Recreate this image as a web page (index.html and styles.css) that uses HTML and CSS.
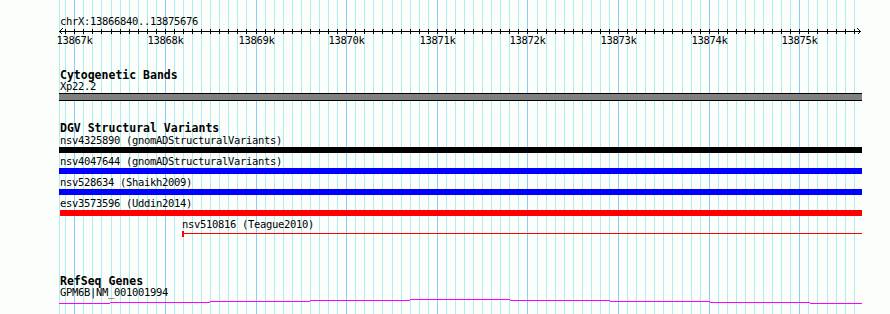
FILE: index.html
```html
<!DOCTYPE html>
<html lang="en">

<head>
    <meta charset="UTF-8">
    <meta name="viewport" content="width=device-width, initial-scale=1.0">
    <title>Genome Browser - chrX:13866840..13875676</title>
    <link rel="stylesheet" href="styles.css">
</head>

<body>
    <div class="browser">
        <div class="grid" id="grid"></div>

        <div class="tracks">
            <div class="locus">chrX:13866840..13875676</div>

            <div class="ruler" id="ruler">
                <svg class="arrow arrow-left" width="6" height="9" viewBox="0 0 6 9">
                    <polyline points="3.5,1.5 0.5,4.5 3.5,7.5" />
                </svg>
                <svg class="arrow arrow-right" width="6" height="9" viewBox="0 0 6 9">
                    <polyline points="2.5,1.5 5.5,4.5 2.5,7.5" />
                </svg>
            </div>
            <div class="ruler-labels" id="ruler-labels"></div>

            <div class="track cyto">
                <div class="track-title">Cytogenetic Bands</div>
                <div class="feature-label">Xp22.2</div>
                <div class="band"></div>
            </div>

            <div class="track dgv">
                <div class="track-title">DGV Structural Variants</div>

                <div class="sv-row">
                    <div class="feature-label">nsv4325890 (gnomADStructuralVariants)</div>
                    <div class="sv-bar black"></div>
                </div>
                <div class="sv-row">
                    <div class="feature-label">nsv4047644 (gnomADStructuralVariants)</div>
                    <div class="sv-bar blue"></div>
                </div>
                <div class="sv-row">
                    <div class="feature-label">nsv528634 (Shaikh2009)</div>
                    <div class="sv-bar blue"></div>
                </div>
                <div class="sv-row">
                    <div class="feature-label">esv3573596 (Uddin2014)</div>
                    <div class="sv-bar red" style="margin-left: 1px;"></div>
                </div>
                <div class="sv-row" style="margin-left: 123px;">
                    <div class="feature-label flush">nsv510816 (Teague2010)</div>
                    <div class="sv-thin"></div>
                </div>
            </div>

            <div class="track refseq">
                <div class="track-title">RefSeq Genes</div>
                <div class="feature-label">GPM6B|NM_001001994</div>
                <div class="gene-line" id="gene-line"></div>
            </div>
        </div>
    </div>

    <script>
        const originBp = 13867000;
        const originX = 74.3;
        const pxPerBp = 0.09063;
        const trackLeft = 59;

        function toX(bp) {
            return Math.round(originX + (bp - originBp) * pxPerBp);
        }

        const grid = document.getElementById('grid');
        const ruler = document.getElementById('ruler');
        const rulerLabels = document.getElementById('ruler-labels');

        // left edge of the view
        const edge = document.createElement('div');
        edge.className = 'grid-line';
        edge.style.left = trackLeft + 'px';
        grid.appendChild(edge);

        for (let bp = 13866900; bp <= 13875600; bp += 100) {
            const x = toX(bp);
            const major = bp % 1000 === 0;

            const line = document.createElement('div');
            line.className = major ? 'grid-line major' : 'grid-line';
            line.style.left = x + 'px';
            grid.appendChild(line);

            const tick = document.createElement('span');
            tick.className = 'tick';
            tick.style.left = (x - trackLeft) + 'px';
            ruler.appendChild(tick);

            if (major) {
                const label = document.createElement('span');
                label.className = 'ruler-label';
                label.textContent = (bp / 1000) + 'k';
                label.style.left = (x - trackLeft + 0.5) + 'px';
                rulerLabels.appendChild(label);
            }
        }

        // gene drawn as steps: [start x, end x, y offset]
        const geneSteps = [
            [59, 110, 4], [110, 210, 3], [210, 310, 2], [310, 410, 1], [410, 510, 0],
            [510, 610, 1], [610, 710, 2], [710, 810, 3], [810, 862, 4]
        ];
        const geneLine = document.getElementById('gene-line');
        geneSteps.forEach(([start, end, offset]) => {
            const seg = document.createElement('span');
            seg.className = 'gene-seg';
            seg.style.width = (end - start) + 'px';
            seg.style.marginTop = offset + 'px';
            geneLine.appendChild(seg);
        });
    </script>
</body>

</html>
```

FILE: styles.css
```css
* {
    margin: 0;
    padding: 0;
    box-sizing: border-box;
}

body {
    font-family: "DejaVu Sans Mono", "Liberation Mono", monospace;
    font-size: 10.5px;
    letter-spacing: -0.32px;
    line-height: 11px;
    color: #000;
    background-color: #fcfefc;
}

.browser {
    position: relative;
    width: 890px;
    height: 314px;
    overflow: hidden;
}

.grid {
    position: absolute;
    top: 0;
    left: 0;
    right: 0;
    bottom: 0;
}

.grid-line {
    position: absolute;
    top: 0;
    bottom: 0;
    width: 1px;
    background: #afeeee;
}

.grid-line.major {
    background: #87cefa;
}

.tracks {
    position: relative;
    margin-left: 59px;
    width: 803px;
    padding-top: 16px;
}

.locus {
    padding-left: 1px;
}

.ruler {
    position: relative;
    height: 8px;
}

.ruler::before {
    content: '';
    position: absolute;
    left: 0;
    right: 2px;
    top: 4px;
    height: 1px;
    background: #000;
}

.arrow {
    position: absolute;
    top: 0;
    shape-rendering: crispEdges;
}

.arrow polyline {
    fill: none;
    stroke: #000;
    stroke-width: 1;
}

.arrow-left {
    left: 0;
}

.arrow-right {
    left: 796px;
}

.tick {
    position: absolute;
    top: 2px;
    width: 1px;
    height: 5px;
    background: #000;
}

.ruler-labels {
    position: relative;
    height: 11px;
}

.ruler-label {
    position: absolute;
    top: 0;
    transform: translateX(-50%);
    white-space: nowrap;
}

.track-title {
    font-weight: bold;
    font-size: 11.5px;
    letter-spacing: 0;
    line-height: 12px;
    padding-left: 1px;
}

.feature-label {
    padding-left: 1px;
    white-space: nowrap;
}

.feature-label.flush {
    padding-left: 0;
}

.cyto {
    margin-top: 23px;
}

.band {
    margin-top: 1px;
    height: 8px;
    background: #808080;
    border-top: 1px solid #000;
    border-bottom: 1px solid #000;
}

.dgv {
    margin-top: 21px;
}

.dgv .track-title {
    margin-bottom: 1px;
}

.sv-row {
    margin-bottom: 3px;
}

.sv-bar {
    margin-top: 1px;
    height: 6px;
}

.sv-bar.black {
    background: #000;
}

.sv-bar.blue {
    background: #0000ff;
}

.sv-bar.red {
    background: #ff0000;
}

.sv-thin {
    position: relative;
    margin-top: 1px;
    height: 6px;
}

.sv-thin::before {
    content: '';
    position: absolute;
    left: 0;
    top: 0;
    width: 2px;
    height: 6px;
    background: #ff0000;
}

.sv-thin::after {
    content: '';
    position: absolute;
    left: 0;
    right: 0;
    top: 2px;
    height: 1px;
    background: #ff0000;
}

.refseq {
    margin-top: 38px;
}

.gene-line {
    display: flex;
    align-items: flex-start;
    margin-top: 1px;
    height: 5px;
}

.gene-seg {
    display: block;
    height: 1px;
    background: #ff00ff;
}
```
